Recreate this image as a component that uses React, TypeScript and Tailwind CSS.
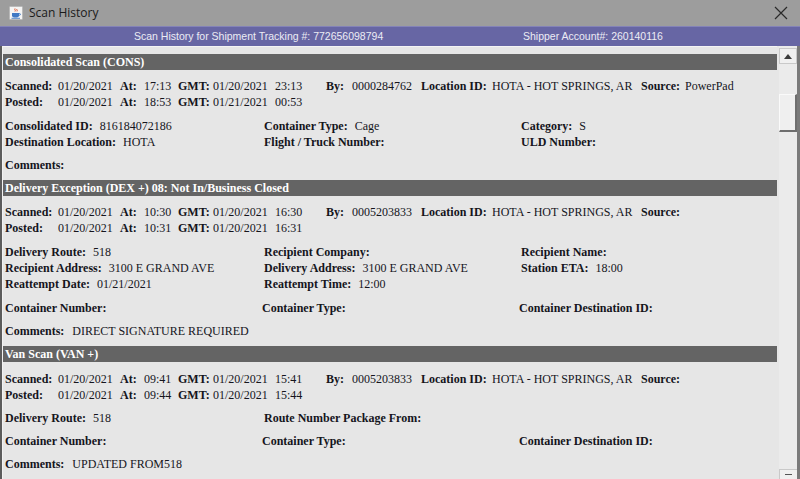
import React from "react";

type Scan = {
  scanned: [string, string, string, string];
  posted: [string, string, string, string];
  by: string;
  location: string;
  source: string;
};

type Pair = { label: string; value?: string };

const serif = { fontFamily: '"Liberation Serif", "Times New Roman", serif' };
const sans = { fontFamily: '"Liberation Sans", Arial, sans-serif' };

function JavaIcon() {
  return (
    <svg width="14" height="14" viewBox="0 0 14 14">
      <rect x="0.5" y="0.5" width="13" height="13" rx="1" fill="#f4f4f4" stroke="#b9b9b9" />
      <path d="M6 2.5c-1 1 1 1.6 0 3" stroke="#e0522b" strokeWidth="1" fill="none" />
      <path d="M8 3c-.8.8.8 1.2 0 2.4" stroke="#e0522b" strokeWidth="1" fill="none" />
      <path d="M3 7h7v2.2c0 1.3-1 2.3-2.3 2.3H5.3C4 11.5 3 10.5 3 9.2z" fill="#3f78c4" />
      <path d="M10 7.6h.8c.8 0 .8 1.6 0 1.6H10" stroke="#3f78c4" strokeWidth="0.9" fill="none" />
      <rect x="2.5" y="11.8" width="8.5" height="0.9" fill="#3f78c4" />
    </svg>
  );
}

function SectionHeader({ title }: { title: string }) {
  return (
    <div className="h-4 bg-[#646464] pl-[2px] text-[12px] font-bold leading-4 text-white whitespace-nowrap">
      {title}
    </div>
  );
}

function ScanRows({ scan }: { scan: Scan }) {
  const rows: [string, [string, string, string, string], boolean][] = [
    ["Scanned:", scan.scanned, true],
    ["Posted:", scan.posted, false],
  ];
  return (
    <div className="grid grid-cols-[53px_62px_24px_34px_35px_62px_51px_26px_69px_71px_149px_44px_1fr] pl-[2px] text-[12px] leading-4 whitespace-nowrap">
      {rows.map(([label, v, first]) => (
        <React.Fragment key={label}>
          <span className="font-bold">{label}</span>
          <span>{v[0]}</span>
          <span className="font-bold">At:</span>
          <span>{v[1]}</span>
          <span className="font-bold">GMT:</span>
          <span>{v[2]}</span>
          <span>{v[3]}</span>
          <span className="font-bold">{first ? "By:" : ""}</span>
          <span>{first ? scan.by : ""}</span>
          <span className="font-bold">{first ? "Location ID:" : ""}</span>
          <span>{first ? scan.location : ""}</span>
          <span className="font-bold">{first ? "Source:" : ""}</span>
          <span>{first ? scan.source : ""}</span>
        </React.Fragment>
      ))}
    </div>
  );
}

function Field({ label, value }: Pair) {
  return (
    <span className="whitespace-nowrap">
      <span className="font-bold">{label}</span>
      {value && <span className="ml-[7px]">{value}</span>}
    </span>
  );
}

function DetailRows({ rows, shift = 0 }: { rows: Pair[][]; shift?: number }) {
  return (
    <div className="pl-[2px] text-[12px] leading-4">
      {rows.map((cells, i) => (
        <div key={i} className="flex h-4">
          {cells.map((c, j) => (
            <div
              key={j}
              className={
                j === 0
                  ? shift
                    ? "w-[257px] shrink-0"
                    : "w-[259px] shrink-0"
                  : j === 1
                  ? "w-[257px] shrink-0"
                  : "flex-1"
              }
            >
              {c.label && <Field label={c.label} value={c.value} />}
            </div>
          ))}
        </div>
      ))}
    </div>
  );
}

function Comments({ value }: { value?: string }) {
  return (
    <div className="h-4 pl-[2px] text-[12px] leading-4 whitespace-nowrap">
      <span className="font-bold">Comments:</span>
      {value && <span className="ml-[8px]">{value}</span>}
    </div>
  );
}

export default function App() {
  return (
    <div className="flex h-[479px] w-[800px] flex-col overflow-hidden bg-[#e6e6e6] text-[#15151c]" style={serif}>
      {/* window title */}
      <div className="flex h-[26px] shrink-0 items-center bg-[#9d9d9d] pl-[9px] pr-[12px]">
        <JavaIcon />
        <span className="ml-[6px] text-[12px] text-[#1a1a1a]" style={{ fontFamily: '"Open Sans", "Noto Sans", sans-serif' }}>
          Scan History
        </span>
        <svg className="ml-auto" width="14" height="14" viewBox="0 0 14 14">
          <path d="M1 1L13 13M13 1L1 13" stroke="#2a2a2a" strokeWidth="1.2" />
        </svg>
      </div>

      {/* tracking info */}
      <div
        className="flex h-[20px] shrink-0 items-center border-t border-[#8483b8] bg-[#6766a4] text-[10.5px] text-[#ececf4]"
        style={sans}
      >
        <div className="w-[523px] shrink-0 pl-[134px]">Scan History for Shipment Tracking #: 772656098794</div>
        <div>Shipper Account#: 260140116</div>
      </div>

      <div className="flex flex-1 overflow-hidden">
        <div className="w-[2px] shrink-0 bg-[#5c5c5c]" />
        <div className="w-[1px] shrink-0 bg-[#f2f2f2]" />

        <div className="w-[774px] shrink-0 border-t border-[#f4f4f4]">
          <div className="mt-[7px]">
            <SectionHeader title="Consolidated Scan (CONS)" />
            <div className="mt-2">
              <ScanRows
                scan={{
                  scanned: ["01/20/2021", "17:13", "01/20/2021", "23:13"],
                  posted: ["01/20/2021", "18:53", "01/21/2021", "00:53"],
                  by: "0000284762",
                  location: "HOTA - HOT SPRINGS, AR",
                  source: "PowerPad",
                }}
              />
            </div>
            <div className="mt-2">
              <DetailRows
                rows={[
                  [
                    { label: "Consolidated ID:", value: "816184072186" },
                    { label: "Container Type:", value: "Cage" },
                    { label: "Category:", value: "S" },
                  ],
                  [
                    { label: "Destination Location:", value: "HOTA" },
                    { label: "Flight / Truck Number:" },
                    { label: "ULD Number:" },
                  ],
                ]}
              />
            </div>
            <div className="mt-[7px]">
              <Comments />
            </div>
          </div>

          <div className="mt-[7px]">
            <SectionHeader title="Delivery Exception (DEX +) 08: Not In/Business Closed" />
            <div className="mt-2">
              <ScanRows
                scan={{
                  scanned: ["01/20/2021", "10:30", "01/20/2021", "16:30"],
                  posted: ["01/20/2021", "10:31", "01/20/2021", "16:31"],
                  by: "0005203833",
                  location: "HOTA - HOT SPRINGS, AR",
                  source: "",
                }}
              />
            </div>
            <div className="mt-2">
              <DetailRows
                rows={[
                  [
                    { label: "Delivery Route:", value: "518" },
                    { label: "Recipient Company:" },
                    { label: "Recipient Name:" },
                  ],
                  [
                    { label: "Recipient Address:", value: "3100 E GRAND AVE" },
                    { label: "Delivery Address:", value: "3100 E GRAND AVE" },
                    { label: "Station ETA:", value: "18:00" },
                  ],
                  [
                    { label: "Reattempt Date:", value: "01/21/2021" },
                    { label: "Reattempt Time:", value: "12:00" },
                    { label: "" },
                  ],
                ]}
              />
            </div>
            <div className="mt-2">
              <DetailRows
                shift={1}
                rows={[[{ label: "Container Number:" }, { label: "Container Type:" }, { label: "Container Destination ID:" }]]}
              />
            </div>
            <div className="mt-[7px]">
              <Comments value="DIRECT SIGNATURE REQUIRED" />
            </div>
          </div>

          <div className="mt-[7px]">
            <SectionHeader title="Van Scan (VAN +)" />
            <div className="mt-[9px]">
              <ScanRows
                scan={{
                  scanned: ["01/20/2021", "09:41", "01/20/2021", "15:41"],
                  posted: ["01/20/2021", "09:44", "01/20/2021", "15:44"],
                  by: "0005203833",
                  location: "HOTA - HOT SPRINGS, AR",
                  source: "",
                }}
              />
            </div>
            <div className="mt-[7px]">
              <DetailRows
                rows={[[{ label: "Delivery Route:", value: "518" }, { label: "Route Number Package From:" }, { label: "" }]]}
              />
            </div>
            <div className="mt-[7px]">
              <DetailRows
                shift={1}
                rows={[[{ label: "Container Number:" }, { label: "Container Type:" }, { label: "Container Destination ID:" }]]}
              />
            </div>
            <div className="mt-[7px]">
              <Comments value="UPDATED FROM518" />
            </div>
          </div>
        </div>

        <div className="w-[2px] shrink-0" />

        {/* vertical scrollbar */}
        <div className="flex w-[18px] shrink-0 flex-col bg-[#ebebeb]">
          <div className="mt-[2px] flex h-[16px] items-center justify-center border border-[#c9c9c9] bg-[#f0f0f0]">
            <svg width="8" height="5" viewBox="0 0 8 5">
              <path d="M0 5L4 0L8 5z" fill="#3c3c3c" />
            </svg>
          </div>
          <div className="mt-[30px] h-[38px] border-t border-l border-b-2 border-r-2 border-t-[#fafafa] border-l-[#fafafa] border-b-[#6e6e6e] border-r-[#6e6e6e] bg-[#efefef]" />
          <div className="mt-auto flex h-[10px] items-start justify-center border-t border-l border-[#c9c9c9] bg-[#f0f0f0]">
            <div className="mt-[4px] h-[1px] w-[7px] bg-[#555]" />
          </div>
        </div>
        <div className="w-[3px] shrink-0 bg-[#7a7a7a]" />
      </div>
    </div>
  );
}
